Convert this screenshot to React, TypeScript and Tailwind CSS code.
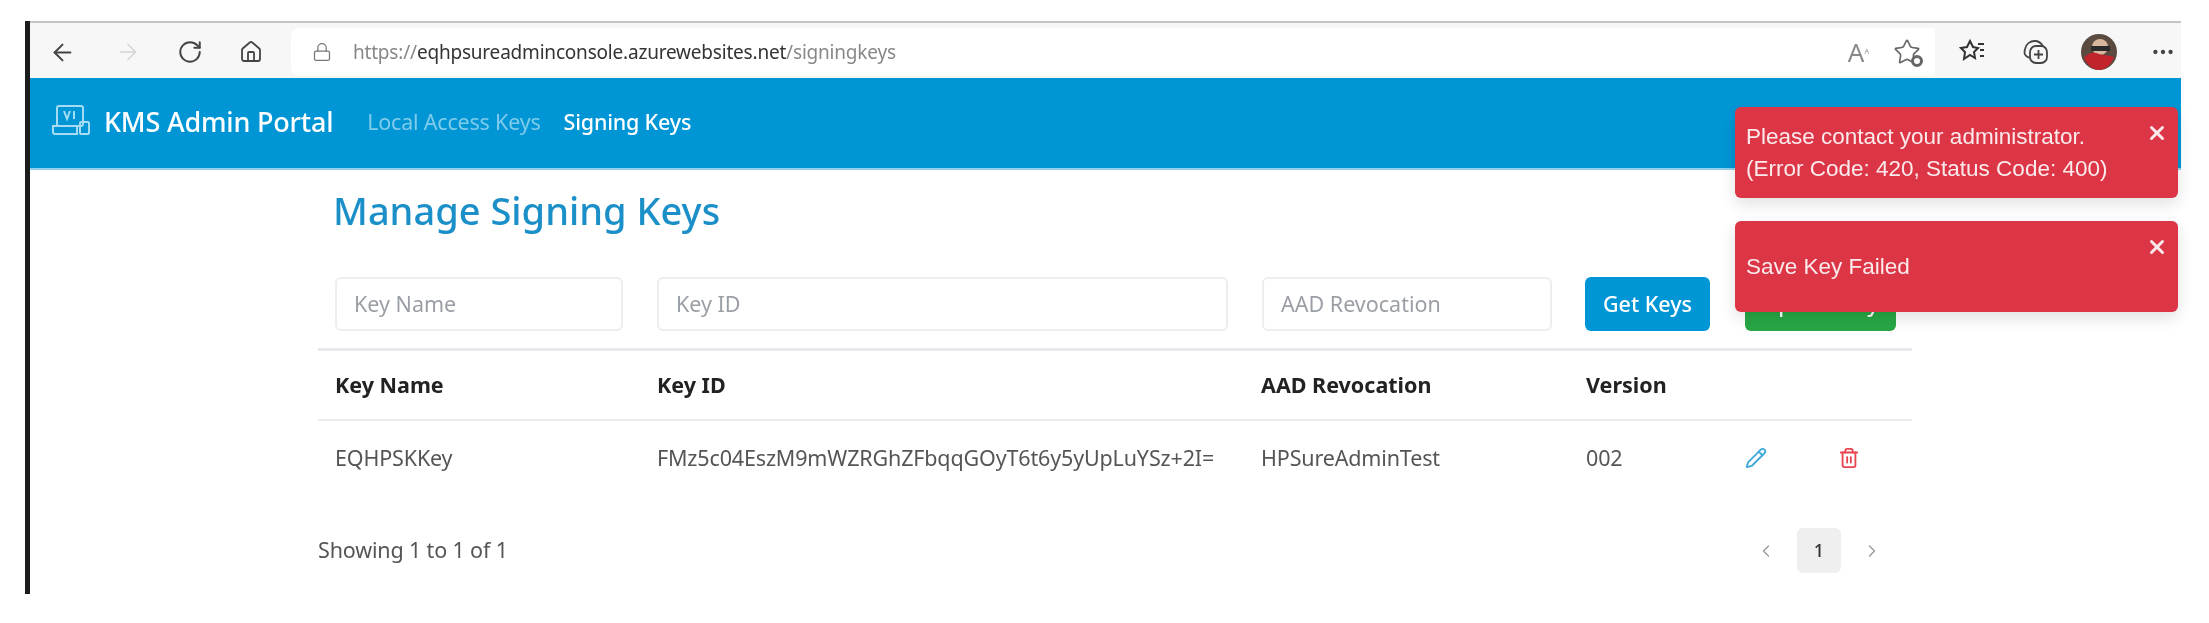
import { ArrowLeft, ArrowRight, ChevronLeft, ChevronRight, Home, Lock, MoreHorizontal, Pencil, RotateCw, Star, Trash2, X } from "lucide-react";

const toasts = [
  { id: 1, lines: ["Please contact your administrator.", "(Error Code: 420, Status Code: 400)"] },
  { id: 2, lines: ["Save Key Failed"] },
];

const BrowserBar = () => (
  <div className="h-[57px] flex items-center bg-[#f7f7f7] border-t-2 border-[#c4c4c4] pl-[19px] pr-[2px] pt-[3px]">
    <div className="w-[242px] flex items-center h-full">
      <div className="w-[66px]"><ArrowLeft size={27} strokeWidth={1.8} className="text-[#444]" /></div>
      <div className="w-[62px]"><ArrowRight size={26} strokeWidth={1.4} className="text-[#d4d4d4]" /></div>
      <div className="w-[62px]"><RotateCw size={26} strokeWidth={1.8} className="text-[#444]" /></div>
      <div><Home size={24} strokeWidth={1.8} className="text-[#444]" /></div>
    </div>
    <div className="w-[1644px] h-[48px] bg-white rounded-l-lg flex items-center pl-[21px]">
      <Lock size={20} strokeWidth={1.5} className="text-[#777]" />
      <div className="ml-[21px] text-[19px] tracking-[-0.2px] text-[#888] font-['Noto_Sans',sans-serif]">
        https://<span className="text-[#333]">eqhpsureadminconsole.azurewebsites.net</span>/signingkeys
      </div>
      <div className="ml-auto flex items-center gap-[24px] pr-[14px]">
        <div className="text-[26px] leading-none text-[#888] font-['Noto_Sans',sans-serif]">A<sup className="text-[11px]">&#x1D2C;</sup></div>
        <div className="relative">
          <Star size={28} strokeWidth={1.4} className="text-[#666]" />
          <div className="absolute right-[-2px] bottom-[-1px] w-[12px] h-[12px] rounded-full bg-white border-[3px] border-[#666]" />
        </div>
      </div>
    </div>
    <div className="flex items-center">
      <div className="ml-[24px] w-[63px]">
        <svg width="28" height="28" viewBox="0 0 28 28" fill="none" stroke="#333" strokeWidth="2">
          <path d="M11 3l3 6 5 1-4 4 1 6-5-3-6 4 1-7-4-4 6-1z" />
          <path d="M19 6h6M21 12h4M21 18h4" />
        </svg>
      </div>
      <div className="w-[53px]">
        <svg width="28" height="28" viewBox="0 0 28 28" fill="none" stroke="#444" strokeWidth="1.8">
          <rect x="8" y="8" width="17" height="17" rx="6" />
          <path d="M8 20c-6-2-6-5-5-9 1-5 5-8 10-8 4 0 6 2 8 5" />
          <path d="M16.500 12v9M12 16.500h9" />
        </svg>
      </div>
      <svg width="36" height="36" viewBox="0 0 36 36" className="ml-[6px]">
        <circle cx="18" cy="18" r="18" fill="#5b4a40" />
        <circle cx="19" cy="13" r="8" fill="#d8b79c" />
        <path d="M10 12h19v5H10z" fill="#2b2b2b" />
        <path d="M3 24c5-6 10-6 15-4 6 2 11 1 15 3-3 8-9 13-15 13S6 31 3 24z" fill="#c1242b" />
      </svg>
      <MoreHorizontal size={26} strokeWidth={2} className="ml-[33px] text-[#444]" />
    </div>
  </div>
);

const NavBar = () => (
  <div className="h-[92px] bg-[#0096d6] border-b-2 border-[#8fd0ec] flex items-center pl-[21px] pb-[2px] font-['Noto_Sans',sans-serif]">
    <svg width="40" height="32" viewBox="0 0 40 32" fill="none" stroke="#a5dcf3" strokeWidth="2" className="mb-[4px]">
      <rect x="6" y="2" width="26" height="20" rx="2" />
      <path d="M13 7l3 8 3-8M23 7v8" />
      <path d="M2 22h24v8H4a2 2 0 0 1-2-2z" />
      <rect x="29" y="18" width="9" height="12" rx="1" />
    </svg>
    <div className="ml-[13px] text-[27px] font-medium text-white tracking-[-0.2px]">KMS Admin Portal</div>
    <div className="ml-[34px] text-[21.5px] text-[#7fcbeb] tracking-[-0.2px]">Local Access Keys</div>
    <div className="ml-[23px] text-[21.5px] font-medium text-white tracking-[-0.2px]">Signing Keys</div>
  </div>
);

const inputCls =
  "h-[54px] border-2 border-[#eceef0] rounded-md pl-[17px] flex items-center text-[21.5px] text-[#9a9fa5]";

const SigningKeys = () => (
  <div className="pl-[288px] w-[1882px] font-['Noto_Sans',sans-serif]">
    <h1 className="pl-[15px] pt-[14px] h-[107px] text-[38px] leading-[52px] font-medium text-[#1b8fc8]">Manage Signing Keys</h1>

    <div className="flex pl-[17px]">
      <div className={`${inputCls} w-[288px]`}>Key Name</div>
      <div className={`${inputCls} w-[571px] ml-[34px]`}>Key ID</div>
      <div className={`${inputCls} w-[290px] ml-[34px]`}>AAD Revocation</div>
      <div className="w-[125px] h-[54px] ml-[33px] rounded-md bg-[#0096d6] text-white text-[21.5px] font-medium flex items-center justify-center">Get Keys</div>
      <div className="w-[151px] h-[54px] ml-[35px] rounded-md bg-[#28a745] text-white text-[21.5px] font-medium flex items-center justify-center">Upload Key</div>
    </div>

    <div className="mt-[17px] border-t-[3px] border-[#e6e8eb] h-[73px] grid grid-cols-[322px_604px_325px_1fr] pl-[17px] items-center border-b-2 border-b-[#e9ebed] text-[21.5px] font-bold text-[#222]">
      <div>Key Name</div>
      <div>Key ID</div>
      <div>AAD Revocation</div>
      <div>Version</div>
    </div>

    <div className="h-[74px] grid grid-cols-[322px_604px_325px_159px_93px_1fr] pl-[17px] items-center text-[21.5px] text-[#555] tracking-[-0.15px]">
      <div>EQHPSKKey</div>
      <div className="whitespace-nowrap">FMz5c04EszM9mWZRGhZFbqqGOyT6t6y5yUpLuYSz+2I=</div>
      <div>HPSureAdminTest</div>
      <div>002</div>
      <div><Pencil size={22} strokeWidth={2} className="text-[#3fa9d8]" /></div>
      <div><Trash2 size={22} strokeWidth={2} className="text-[#e8434f]" /></div>
    </div>

    <div className="mt-[33px] flex items-center justify-between">
      <div className="text-[21.5px] text-[#555] tracking-[-0.15px]">Showing 1 to 1 of 1</div>
      <div className="flex items-center pr-[30px]">
        <ChevronLeft size={20} strokeWidth={1.6} className="text-[#999]" />
        <div className="mx-[21px] w-[44px] h-[45px] rounded-md bg-[#efefef] flex items-center justify-center text-[18px] font-medium text-[#333]">1</div>
        <ChevronRight size={20} strokeWidth={1.6} className="text-[#999]" />
      </div>
    </div>
  </div>
);

export default function App() {
  return (
    <div className="relative w-[2209px] h-[623px] overflow-hidden bg-white pt-[21px] pl-[25px] blur-[0.6px]">
      <div className="w-[2156px] h-[573px] border-l-[5px] border-[#1c1c1c]">
        <BrowserBar />
        <NavBar />
        <SigningKeys />
      </div>

      <div className="absolute top-[107px] left-[1735px] w-[443px] flex flex-col gap-[23px] font-['Liberation_Sans',sans-serif]">
        {toasts.map((t) => (
          <div key={t.id} className="h-[91px] bg-[#dc3545] rounded-md shadow-[0_6px_16px_rgba(0,0,0,0.12)] flex items-center pl-[11px] pr-[10px]">
            <div className="flex-1 text-[22.5px] leading-[32px] text-[#fbeaec]">
              {t.lines.map((l) => (
                <div key={l}>{l}</div>
              ))}
            </div>
            <X size={22} strokeWidth={3.2} className="self-start mt-[15px] text-[#fbeaec]" />
          </div>
        ))}
      </div>
    </div>
  );
}
